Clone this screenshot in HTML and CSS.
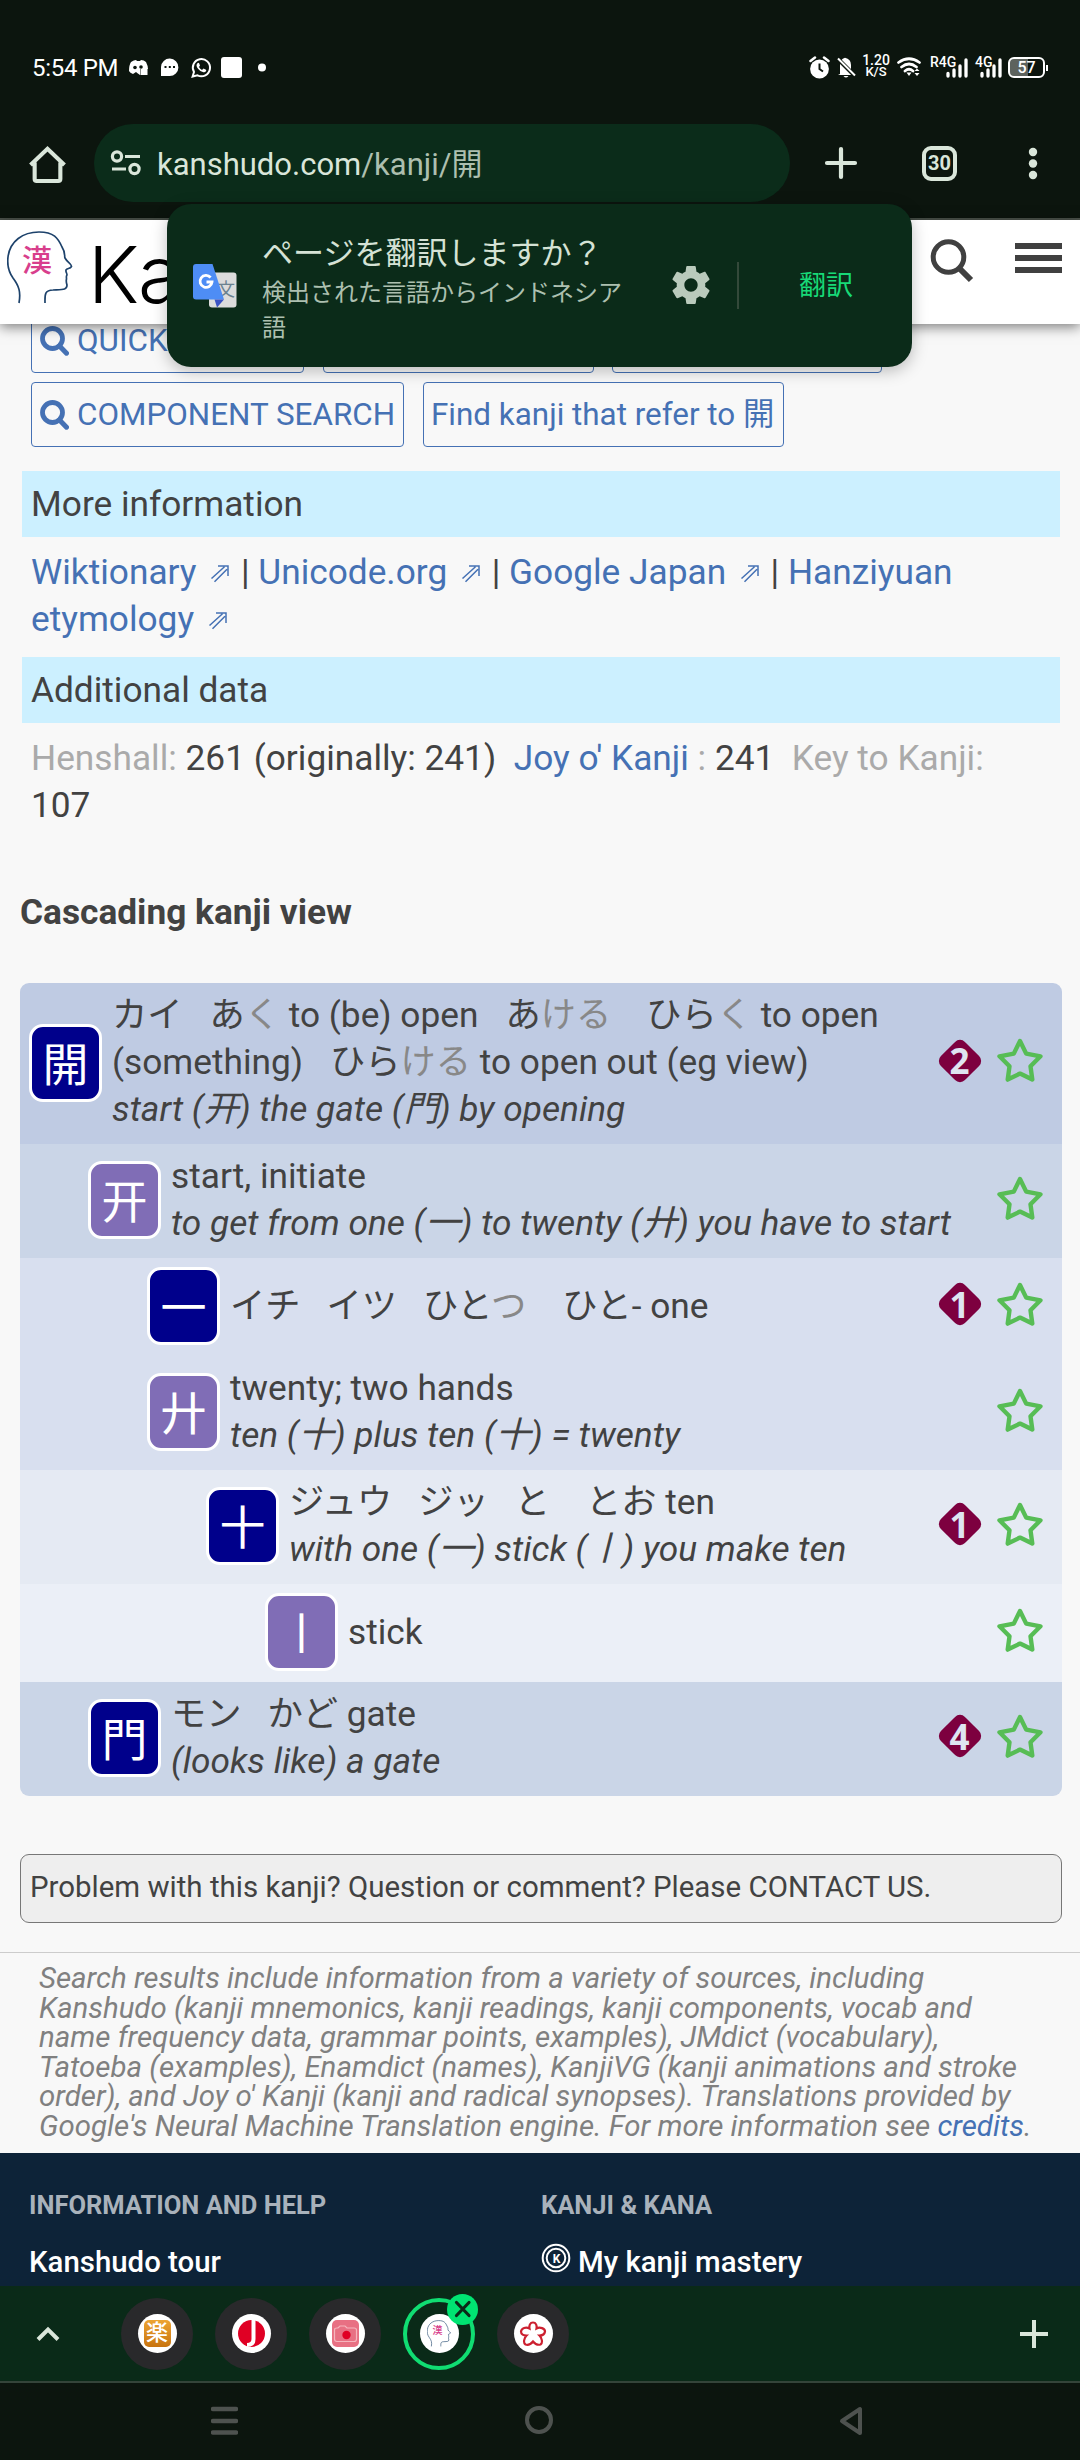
FILE: index.html
```html
<!DOCTYPE html>
<html lang="en">
<head>
<meta charset="utf-8">
<title>Kanshudo</title>
<link rel="stylesheet" href="styles.css">
</head>
<body>
<svg class="defs" width="0" height="0" aria-hidden="true">
  <symbol id="star" viewBox="0 0 46 44"><path d="M23 3 L29.200 15.600 L43.500 18.300 L33.500 28.300 L35.300 41.600 L23 35.600 L10.700 41.600 L12.500 28.300 L2.500 18.300 L16.800 15.600 Z" fill="none" stroke="#57bd55" stroke-width="4.400" stroke-linejoin="round"/></symbol>
  <symbol id="glass" viewBox="0 0 29 30"><circle cx="12.500" cy="12.500" r="10" fill="none" stroke="#4571b4" stroke-width="4.800"/><path d="M19.500 20 L26.500 27.200" stroke="#4571b4" stroke-width="5" stroke-linecap="round"/></symbol>
  <symbol id="head" viewBox="0 0 66 73"><path d="M12 72 C14 61 12 55 6 47 C1 40 0 34 1 26 C3 10 16 1 32 1 C47 1 51 7 55 16 C59 22 57 25 58 27 C60 31 65 33 64.500 35.500 C63 38 60 37 59 39 C58.500 41 60 42 60 44 C59 45 59.500 46 59.500 48 C59 50 59 51 60 54 C60 59 56 58.500 46 59 C37 59 38 65 38 72" fill="none" stroke="#1d426b" stroke-width="1.700"/></symbol>
  <symbol id="ext" viewBox="0 0 20 20"><path d="M1.500 14.500 L14.500 2.700 M4.500 17.800 L17 5.200 M8 2 H18 V12" fill="none" stroke="#4571b4" stroke-width="1.500"/></symbol>
  <symbol id="bars" viewBox="0 0 22 20"><path d="M2 15.500 V18 M8 12 V18 M14 8 V18 M20 2 V18" stroke="#fff" stroke-width="3.300" stroke-linecap="round"/></symbol>
</svg>

<header class="status">
  <span class="clock">5:54 PM</span>
  <svg class="st-left" width="140" height="24" viewBox="0 0 140 24">
    <path d="M3 6 Q6 4 8 4 L9 5 H12 L13 4 Q16 4 18 6 Q20 10 20 13 H12 V19 Q9 17 8 16 L5 18 Q2 17 1 15 Q1 9 3 6Z" fill="#fff"/><circle cx="7" cy="11.500" r="1.800" fill="#0c150e"/><circle cx="13" cy="11" r="1.800" fill="#0c150e"/><rect x="12.500" y="13" width="7" height="6" fill="#fff"/>
    <path d="M33 20 V11 A8.700 8.700 0 1 1 41.700 20Z" fill="#fff"/><path d="M36.500 11 h2 M40.800 11 h2 M45 11 h2" stroke="#0c150e" stroke-width="2"/>
    <path d="M64.600 20.500 L66 16 A8.600 8.600 0 1 1 69.500 19.300 Z" fill="none" stroke="#fff" stroke-width="2"/><path d="M70 6.800 q-3 2 0 6 q3.500 4.500 7 3.200 q2-1 1-2.300 l-2.500-1.300 -1.500 1.500 q-2-1-3-3 l1-1.500 -1-2.300z" fill="#fff"/>
    <rect x="93" y="1" width="21" height="21" rx="3" fill="#fff"/><circle cx="134" cy="11.500" r="4" fill="#fff"/>
  </svg>
  <div class="st-right">
    <svg width="48" height="24" viewBox="0 0 48 24"><circle cx="10.500" cy="13" r="9.400" fill="#fff"/><path d="M1.500 5 L6 1.500 M15 1.500 L19.500 5" stroke="#fff" stroke-width="2.500" stroke-linecap="round"/><path d="M10.500 7.500 V13 L14 15.500" fill="none" stroke="#0c150e" stroke-width="2"/><path d="M31 18 V9 Q31 3 36 1.800 Q42 3 42 9 V15 L44.500 19 H29Z" fill="#fff"/><path d="M34.500 20 h5 q-2.500 3 -5 0" fill="#fff"/><path d="M28 2 L46 20" stroke="#0c150e" stroke-width="4"/><path d="M29 2.500 L46 19.500" stroke="#fff" stroke-width="2"/></svg>
    <div class="speed"><b>1.20</b><b class="unit">K/S</b></div>
    <svg class="wifi" width="24" height="22" viewBox="0 0 24 22"><path d="M1.500 6.500 Q12 -1 22.500 6.500 M4.500 11 Q12 5 19.500 11 M8 15 Q12 11.500 16 15" fill="none" stroke="#fff" stroke-width="2.700" stroke-linecap="round"/><path d="M9.500 16.500 h5 L12 20Z M17.500 15 l2.500-2.500 2.500 2.500z M17.500 17 h5 l-2.500 3z" fill="#fff"/></svg>
    <div class="sim sim-r"><b>R4G</b><svg width="22" height="20"><use href="#bars"/></svg></div>
    <div class="sim"><b>4G</b><svg width="22" height="20"><use href="#bars"/></svg></div>
    <div class="battery"><b>57</b></div>
  </div>
</header>

<div class="toolbar">
  <svg class="home" width="37" height="37" viewBox="0 0 36 36"><path d="M1.500 18.500 L18 2.800 L34.500 18.500 M5.500 16 V32 Q5.500 34 7.500 34 H28.500 Q30.500 34 30.500 32 V16" fill="none" stroke="#dae6da" stroke-width="4" stroke-linejoin="miter"/></svg>
  <div class="url">
    <svg width="32" height="26" viewBox="0 0 32 26"><g fill="none" stroke="#dae6da" stroke-width="3.200"><circle cx="7" cy="6.500" r="4.600"/><circle cx="24.500" cy="19" r="4.600"/><path d="M15 6.500 H30 M2 19 H16"/></g></svg>
    <span class="host">kanshudo.com<span class="path">/kanji/開</span></span>
  </div>
  <svg class="plus" width="34" height="34" viewBox="0 0 34 34"><path d="M17 3 V31 M3 17 H31" stroke="#dae6da" stroke-width="4.200" stroke-linecap="round"/></svg>
  <div class="tabs">30</div>
  <svg class="kebab" width="10" height="36" viewBox="0 0 10 36"><g fill="#dae6da"><circle cx="5" cy="6" r="4.200"/><circle cx="5" cy="17.500" r="4.200"/><circle cx="5" cy="29" r="4.200"/></g></svg>
</div>

<nav class="site">
  <div class="logo"><svg width="66" height="73"><use href="#head"/></svg><span class="han">漢</span></div>
  <span class="brand">Ka</span>
  <svg class="find" width="44" height="46" viewBox="0 0 44 46"><circle cx="18.500" cy="19" r="15.300" fill="none" stroke="#404040" stroke-width="5"/><path d="M29 30 L41 42" stroke="#404040" stroke-width="6"/></svg>
  <svg class="burger" width="47" height="30" viewBox="0 0 47 30"><path d="M0 3 H47 M0 15 H47 M0 27 H47" stroke="#404040" stroke-width="6"/></svg>
</nav>

<aside class="popup">
  <svg class="gt" width="44" height="44" viewBox="0 0 44 44"><rect x="16" y="8.500" width="27.500" height="35" rx="3" fill="#dcdcdc"/><text x="24" y="32" class="wen">文</text><path d="M3 0 H19.500 L31 35.500 H3 Q0 35.500 0 32.500 V3 Q0 0 3 0Z" fill="#4e8df5"/><path d="M21.500 35.500 H31 L24 43.500Z" fill="#3b53c4"/><path d="M17.600 13.500 A6 6 0 1 0 19 18 H13.500" fill="none" stroke="#fff" stroke-width="2.800"/></svg>
  <div class="ask"><p class="ask-title">ページを翻訳しますか？</p><p class="ask-sub">検出された言語からインドネシア<br>語</p></div>
  <svg class="gear" width="40" height="40" viewBox="1.500 1.500 21 21"><path fill="#bacabc" d="M19.430 12.980c.040-.320.070-.640.070-.980s-.030-.660-.070-.980l2.110-1.650c.190-.150.240-.420.120-.640l-2-3.460c-.120-.220-.390-.300-.610-.220l-2.490 1c-.520-.400-1.080-.730-1.690-.980l-.380-2.650C14.460 2.180 14.250 2 14 2h-4c-.250 0-.460.180-.490.420l-.380 2.650c-.610.250-1.170.590-1.690.980l-2.490-1c-.230-.090-.490 0-.610.220l-2 3.460c-.130.220-.070.490.120.640l2.110 1.650c-.040.320-.070.650-.070.980s.030.660.070.980l-2.110 1.650c-.190.150-.240.420-.120.640l2 3.460c.120.220.390.300.610.220l2.490-1c.520.400 1.080.730 1.690.980l.380 2.650c.030.240.240.420.490.420h4c.250 0 .460-.180.490-.420l.380-2.650c.610-.250 1.170-.590 1.690-.980l2.490 1c.230.090.490 0 .610-.220l2-3.460c.120-.220.070-.490-.120-.640l-2.110-1.650zM12 15.500c-1.930 0-3.500-1.570-3.500-3.500s1.570-3.500 3.500-3.500 3.500 1.570 3.500 3.500-1.570 3.500-3.500 3.500z"/></svg>
  <i class="rule"></i>
  <span class="go">翻訳</span>
</aside>

<main class="page">
  <div class="btns row1">
    <a class="btn b1"><svg width="29" height="30"><use href="#glass"/></svg>QUICK SEARCH</a><a class="btn b2"></a><a class="btn b3"></a>
  </div>
  <div class="btns row2">
    <a class="btn b4"><svg width="29" height="30"><use href="#glass"/></svg>COMPONENT SEARCH</a><a class="btn b5">Find kanji that refer to 開</a>
  </div>

  <h3 class="band first">More information</h3>
  <p class="info"><a>Wiktionary <svg class="ext" width="20" height="20"><use href="#ext"/></svg></a> | <a>Unicode.org <svg class="ext" width="20" height="20"><use href="#ext"/></svg></a> | <a>Google Japan <svg class="ext" width="20" height="20"><use href="#ext"/></svg></a> | <a>Hanziyuan<br>etymology <svg class="ext" width="20" height="20"><use href="#ext"/></svg></a></p>
  <h3 class="band">Additional data</h3>
  <p class="info"><span class="dim">Henshall:</span> 261 (originally: 241)&nbsp; <a>Joy o' Kanji</a> <span class="dim">:</span> 241&nbsp; <span class="dim">Key to Kanji:</span><br>107</p>

  <h2 class="title">Cascading kanji view</h2>

  <section class="tree">
    <div class="row l1"><span class="k navy">開</span><div class="txt"><div><span class="g">カイ</span><span class="g">あ<i>く</i> to (be) open</span><span class="g w">あ<i>ける</i></span><span>ひら<i>く</i> to open</span></div><div><span class="g">(something)</span><span>ひら<i>ける</i> to open out (eg view)</span></div><em>start (开) the gate (門) by opening</em></div><span class="lv"><b>2</b></span><svg class="star" width="46" height="44"><use href="#star"/></svg></div>
    <div class="row l2"><span class="k">开</span><div class="txt"><div>start, initiate</div><em>to get from one (一) to twenty (廾) you have to start</em></div><svg class="star" width="46" height="44"><use href="#star"/></svg></div>
    <div class="row l3"><span class="k navy">一</span><div class="txt"><div><span class="g">イチ</span><span class="g">イツ</span><span class="g w">ひと<i>つ</i></span><span>ひと- one</span></div></div><span class="lv"><b>1</b></span><svg class="star" width="46" height="44"><use href="#star"/></svg></div>
    <div class="row l3"><span class="k">廾</span><div class="txt"><div>twenty; two hands</div><em>ten (十) plus ten (十) = twenty</em></div><svg class="star" width="46" height="44"><use href="#star"/></svg></div>
    <div class="row l4"><span class="k navy">十</span><div class="txt"><div><span class="g">ジュウ</span><span class="g">ジッ</span><span class="g w">と</span><span>とお ten</span></div><em>with one (一) stick (〡) you make ten</em></div><span class="lv"><b>1</b></span><svg class="star" width="46" height="44"><use href="#star"/></svg></div>
    <div class="row l5"><span class="k">〡</span><div class="txt"><div>stick</div></div><svg class="star" width="46" height="44"><use href="#star"/></svg></div>
    <div class="row l2"><span class="k navy">門</span><div class="txt"><div><span class="g">モン</span><span>かど gate</span></div><em>(looks like) a gate</em></div><span class="lv"><b>4</b></span><svg class="star" width="46" height="44"><use href="#star"/></svg></div>
  </section>

  <div class="contact">Problem with this kanji? Question or comment? Please CONTACT US.</div>
  <p class="credits">Search results include information from a variety of sources, including<br>Kanshudo (kanji mnemonics, kanji readings, kanji components, vocab and<br>name frequency data, grammar points, examples), JMdict (vocabulary),<br>Tatoeba (examples), Enamdict (names), KanjiVG (kanji animations and stroke<br>order), and Joy o' Kanji (kanji and radical synopses). Translations provided by<br>Google's Neural Machine Translation engine. For more information see <a>credits</a>.</p>
</main>

<footer class="foot">
  <div><h4>INFORMATION AND HELP</h4><p>Kanshudo tour</p></div>
  <div><h4>KANJI &amp; KANA</h4><p><svg class="coin" width="30" height="30" viewBox="0 0 30 30"><circle cx="15" cy="15" r="13.300" fill="none" stroke="#fff" stroke-width="2"/><circle cx="15" cy="15" r="9.300" fill="none" stroke="#fff" stroke-width="2"/><text x="15.500" y="19.500" class="coin-k">K</text></svg>My kanji mastery</p></div>
</footer>

<div class="strip">
  <svg class="up" width="24" height="16" viewBox="0 0 24 16"><path d="M2 13.500 L12 3.500 L22 13.500" fill="none" stroke="#dae6da" stroke-width="4"/></svg>
  <div class="favs">
    <span class="fav"><span class="disc"><span class="sq gold">楽</span></span></span>
    <span class="fav"><span class="disc"><svg width="27" height="27" viewBox="0 0 27 27"><circle cx="13.500" cy="13.500" r="13.500" fill="#e00024"/><path d="M15.500 0 V19 Q15.500 25 9 25" fill="none" stroke="#fff" stroke-width="4"/></svg></span></span>
    <span class="fav"><span class="disc"><svg width="27" height="27" viewBox="0 0 27 27"><rect width="27" height="27" rx="5" fill="#e87083"/><path d="M2.500 10 Q2.500 8 5 8 H6 L8 6 H13 L15 8 H22 Q24.500 8 24.500 10 V19 Q24.500 21.500 22 21.500 H5 Q2.500 21.500 2.500 19Z" fill="none" stroke="#f6b5bd" stroke-width="1.200"/><circle cx="14.500" cy="15" r="4.200" fill="#e00024"/></svg></span></span>
    <span class="fav on"><span class="disc"><svg width="24" height="27"><use href="#head"/></svg><b class="mini">漢</b></span><svg class="x" width="31" height="31" viewBox="0 0 31 31"><circle cx="15.500" cy="15.500" r="15.500" fill="#00e472"/><path d="M9.500 8.500 L22 21.500 M22 8.500 L9.500 21.500" stroke="#0a2a18" stroke-width="3.200" stroke-linecap="round"/></svg></span>
    <span class="fav"><span class="disc"><svg width="28" height="26" viewBox="0 0 28 26"><path d="M10.500 7.500 C10 4.500 11 1.500 14 1.500 C17 1.500 18 4.500 17.500 7.500 C21 5.500 26 7.500 26 10.500 C25.500 14 23 14.500 20.500 14.500 C23 17 24 22 21.500 23.500 C18 24.500 16 23 14 20.500 C12 23 9.500 24.500 6.500 23.500 C4 22 5 17 7.500 14.500 C4.500 14.500 2 13.500 2 10.500 C2.500 7 7 5.500 10.500 7.500Z" fill="none" stroke="#cc2030" stroke-width="2.200"/></svg></span></span>
  </div>
  <svg class="add" width="28" height="28" viewBox="0 0 28 28"><path d="M14 0 V28 M0 14 H28" stroke="#dae6da" stroke-width="4"/></svg>
</div>
<div class="sysnav">
  <svg width="27" height="30" viewBox="0 0 27 30"><path d="M2 3 H25 M2 15 H25 M2 26.500 H25" stroke="#4e524f" stroke-width="4.500" stroke-linecap="round"/></svg>
  <svg width="28" height="28" viewBox="0 0 28 28"><circle cx="14" cy="14" r="12" fill="none" stroke="#4e524f" stroke-width="4"/></svg>
  <svg width="24" height="30" viewBox="0 0 24 30"><path d="M21 3 V27 L3 15Z" fill="none" stroke="#4e524f" stroke-width="4" stroke-linejoin="round"/></svg>
</div>
</body>
</html>
```

FILE: styles.css
```css
* { box-sizing: border-box; margin: 0; padding: 0; }
body { width: 1080px; height: 2460px; overflow: hidden; display: flex; flex-direction: column; position: relative; background: #f8f8f8; color: #424242; font-family: Roboto, "Noto Sans CJK JP", sans-serif; font-size: 35.250px; line-height: 47px; }
svg { display: block; flex: none; }
.defs { position: absolute; }
a { color: #4571b4; }

.status { height: 124px; background: #0c150e; color: #fff; display: flex; align-items: flex-start; padding: 56px 32px 0 32px; }
.clock { font-size: 24px; line-height: 24px; width: 96px; white-space: nowrap; letter-spacing: -.3px; }
.st-right { margin-left: auto; display: flex; }
.speed { margin-left: 6px; width: 26px; font-size: 14px; line-height: 12px; display: flex; flex-direction: column; align-items: center; margin-top: -2px; font-weight: 500; }
.speed b, .sim b { font-weight: 500; }
.speed .unit { font-size: 13px; }
.wifi { margin-left: 8px; }
.sim { display: flex; position: relative; margin-left: 7px; width: 27px; justify-content: flex-end; padding-top: 2px; }
.sim-r { width: 38px; margin-left: 9px; }
.sim b { position: absolute; left: 0; top: -1px; font-size: 14px; line-height: 14px; }
.battery { margin: 1px 3px 0 6px; width: 37px; height: 21px; border: 2px solid #fff; border-radius: 6px; position: relative; background: linear-gradient(90deg, #5d635e 56%, transparent 56%); font-size: 16px; line-height: 18px; text-align: center; }
.battery b { font-weight: 500; }
.battery::after { content: ""; position: absolute; right: -5px; top: 6px; width: 2px; height: 6px; background: #fff; }

.toolbar { height: 96px; background: #0c150e; border-bottom: 2px solid #4b524b; display: flex; align-items: flex-start; padding-left: 29px; }
.home { margin-top: 22px; }
.url { margin-left: 28px; width: 696px; height: 78px; border-radius: 39px; background: #0b2c1a; display: flex; align-items: center; padding-left: 16px; gap: 15px; }
.host { font-size: 31px; color: #dae6da; white-space: nowrap; padding-top: 3px; }
.path { color: #adbfaf; }
.plus { margin: 22px 0 0 34px; }
.tabs { margin: 22px 0 0 64px; width: 35px; height: 35px; border: 4px solid #dae6da; border-radius: 9px; color: #dae6da; font-size: 20px; line-height: 26px; font-weight: 700; text-align: center; }
.kebab { margin: 22px 0 0 71px; }

.site { height: 104px; flex: none; background: #fff; box-shadow: 0 3px 12px rgba(0,0,0,.5); position: relative; z-index: 1; display: flex; align-items: flex-start; }
.logo { position: relative; margin: 11px 0 0 7px; }
.han { position: absolute; left: 15px; top: 8px; color: #d83e8c; font-size: 30px; line-height: 44px; font-weight: 500; }
.brand { color: #000; font-family: Inter, Roboto, sans-serif; font-weight: 300; font-size: 79px; line-height: 90px; margin: 9px 0 0 15px; letter-spacing: -1px; }
.find { margin: 18px 0 0 auto; }
.burger { margin: 23px 18px 0 41px; }

.popup { position: absolute; z-index: 2; left: 167px; top: 204px; width: 745px; height: 163px; border-radius: 24px; background: #0b2b19; box-shadow: 0 4px 16px rgba(0,0,0,.25); display: flex; align-items: flex-start; color: #d5e2d5; }
.gt { margin: 60px 0 0 26px; }
.wen { font-size: 18px; fill: #6b8290; }
.ask { margin: 27px 0 0 25px; width: 370px; white-space: nowrap; }
.ask-title { font-size: 31px; line-height: 45px; }
.ask-sub { font-size: 24px; line-height: 35px; color: #adc0b0; }
.gear { margin: 61px 0 0 39px; }
.rule { width: 2px; height: 47px; background: #34493a; margin: 58px 0 0 26px; }
.go { margin: 62px 0 0 60px; font-size: 27px; line-height: 40px; color: #17d977; }

.page { height: 1829px; flex: none; }
.btns { display: flex; padding-left: 31px; gap: 19px; }
.row1 { gap: 18.500px; margin-top: -16px; }
.row2 { margin-top: 9px; }
.btn { height: 65px; border: 1.500px solid #4571b4; border-radius: 4px; font-size: 31.400px; line-height: 62px; padding-left: 8px; display: flex; align-items: center; gap: 8px; white-space: nowrap; }
.b1 { width: 273px; } .b2 { width: 271px; } .b3 { width: 270px; } .b4 { width: 373px; } .b5 { width: 361px; padding-left: 7px; }
.band { margin: 0 20px 0 22px; height: 66px; background: #ccf0ff; font-size: 35.250px; font-weight: 400; line-height: 67px; padding-left: 9px; }
.first { margin-top: 24px; }
.info { padding: 12px 0 14px 31px; height: 120px; white-space: nowrap; }
.info .ext { display: inline-block; margin: 0 2px 0 5px; }
.dim { color: #aaa; }
.title { margin: 45px 0 0 20px; font-size: 35.250px; line-height: 48px; font-weight: 700; }

.tree { margin: 47px 18px 0 20px; border-radius: 9px; overflow: hidden; }
.row { display: flex; align-items: center; padding: 9px 19px 11px 9px; min-height: 98px; }
.l1 { background: #bfcbe3; }
.l2 { background: #cad5e7; padding-left: 68px; }
.l3 { background: #d8dfef; padding-left: 127px; }
.l4 { background: #e5eaf3; padding-left: 186px; }
.l5 { background: #ebeff7; padding-left: 245px; }
.k { flex: none; width: 73px; height: 78px; border: 3px solid #fff; border-radius: 14px; background: #806db6; color: #fff; font-family: "Noto Sans CJK JP", sans-serif; font-size: 46px; line-height: 69px; text-align: center; }
.navy { background: #00008b; }
.txt { margin-left: 10px; flex: 1; white-space: nowrap; }
.txt em { display: block; }
.txt i { font-style: normal; color: #888; }
.g { margin-right: 26px; }
.w { margin-right: 36px; }
.l1 .g { margin-right: 27px; }
.l1 .w { margin-right: 35px; }
.lv { width: 43px; height: 43px; margin: 0 16px 4px 0; display: grid; place-items: center; position: relative; color: #dfe4f1; font-family: "Open Sans", sans-serif; font-size: 35px; line-height: 43px; }
.lv::before { content: ""; position: absolute; left: 4.500px; top: 4.500px; width: 34px; height: 34px; border-radius: 7px; background: #7d003f; transform: rotate(45deg); }
.lv b { position: relative; font-weight: 700; }
.star { margin-bottom: 5px; }

.contact { margin: 58px 18px 0 20px; height: 69px; border: 1.500px solid #777; border-radius: 9px; background: #eee; font-size: 29.450px; line-height: 65px; padding-left: 9px; white-space: nowrap; }
.credits { margin-top: 29px; border-top: 1px solid #ccc; padding: 11px 0 0 39px; font-size: 29.430px; line-height: 29.500px; font-style: italic; color: #808080; white-space: nowrap; }

.foot { height: 133px; flex: none; background: #0d2338; color: #fff; display: flex; padding: 38px 0 0 29px; white-space: nowrap; overflow: hidden; }
.foot div { width: 512px; }
.foot h4 { font-size: 25.500px; line-height: 28px; font-weight: 700; color: #a9b2bb; }
.foot p { font-size: 29.400px; font-weight: 500; line-height: 40px; margin-top: 23px; display: flex; align-items: center; gap: 7px; }
.coin { margin-top: -9px; }
.coin-k { font-size: 12px; font-weight: 700; fill: #fff; text-anchor: middle; }

.strip { height: 97px; flex: none; background: #0a2a18; border-bottom: 2px solid #34443a; display: flex; align-items: center; padding: 0 32px 0 36px; }
.favs { display: flex; gap: 22px; margin-left: 61px; flex: 1; }
.fav { width: 72px; height: 72px; border-radius: 50%; background: #29292b; display: grid; place-items: center; position: relative; }
.on { background: none; border: 4px solid #10dd72; }
.disc { width: 39px; height: 39px; border-radius: 50%; background: #fff; display: grid; place-items: center; position: relative; }
.sq { width: 27px; height: 27px; border-radius: 5px; background: linear-gradient(#eda432, #c87410); color: #fff; font-size: 22px; line-height: 26px; text-align: center; font-weight: 500; }
.mini { position: absolute; left: 13px; top: 10px; font-size: 10px; line-height: 14px; color: #d83e8c; font-weight: 500; }
.x { position: absolute; left: 40px; top: -8px; }
.sysnav { flex: 1; background: #0c150e; display: flex; align-items: flex-start; justify-content: space-between; padding: 23px 217px 0 211px; }
```
